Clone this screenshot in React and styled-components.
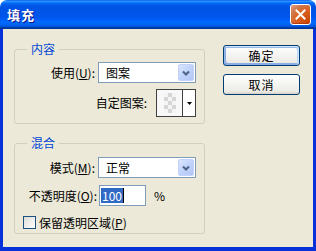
import React from 'react';
import styled, { createGlobalStyle } from 'styled-components';

const GlobalStyle = createGlobalStyle`
  html, body {
    margin: 0;
    padding: 0;
    background: #ffffff;
  }
  body {
    font-family: "Noto Sans CJK SC", "Liberation Sans", sans-serif;
    font-size: 12px;
    color: #000;
  }
`;

const Window = styled.div`
  width: 316px;
  height: 251px;
  display: flex;
  flex-direction: column;
  box-sizing: border-box;
`;

const TitleBar = styled.div`
  height: 29px;
  flex-shrink: 0;
  display: flex;
  align-items: center;
  justify-content: space-between;
  padding: 0 5px 0 7px;
  border-radius: 7px 7px 0 0;
  background: linear-gradient(
    to bottom,
    #0058ee 0%,
    #3593ff 4%,
    #288eff 6%,
    #127dff 8%,
    #036ffc 10%,
    #0262ee 14%,
    #0057e5 20%,
    #0054e3 24%,
    #0055eb 56%,
    #005bf5 66%,
    #026afe 76%,
    #0062ef 86%,
    #0052d6 92%,
    #0040ab 94%,
    #003092 100%
  );
`;

const Title = styled.span`
  color: #fff;
  font-weight: bold;
  font-size: 13px;
  letter-spacing: 1px;
  text-shadow: 1px 1px #0f1089;
`;

const CloseButton = styled.div`
  width: 21px;
  height: 21px;
  box-sizing: border-box;
  border: 1px solid #fff;
  border-radius: 3px;
  display: flex;
  align-items: center;
  justify-content: center;
  background: radial-gradient(circle at 90% 90%, #cc4600 0%, #dc6527 55%, #cd7546 70%, #e5a284 100%);
  box-shadow: inset 0 -1px 1px #b03a10;
`;

const Body = styled.div`
  flex: 1;
  display: flex;
  align-items: flex-start;
  gap: 18px;
  background: #ece9d8;
  border: 3px solid #0831d9;
  border-top: none;
  border-bottom-width: 4px;
  padding: 13px 0 0 11px;
`;

const Column = styled.div`
  display: flex;
  flex-direction: column;
  gap: ${p => p.gap || 0}px;
  padding-top: ${p => p.top || 0}px;
`;

const Group = styled.fieldset`
  width: 190px;
  box-sizing: border-box;
  margin: 0;
  border: 1px solid #d0d0bf;
  border-radius: 3px;
  padding: ${p => p.pad};
  display: flex;
  flex-direction: column;
`;

const Legend = styled.legend`
  color: #0046d5;
  line-height: 14px;
  padding: 0 4px;
  margin-left: 4px;
`;

const Row = styled.div`
  display: flex;
  align-items: center;
  gap: ${p => p.gap}px;
  margin-top: ${p => p.top || 0}px;
  height: ${p => p.h}px;
`;

const Label = styled.span`
  width: ${p => p.w}px;
  text-align: right;
  white-space: nowrap;
  line-height: 14px;
`;

const Key = styled.span`
  text-decoration: underline;
`;

const Select = styled.div`
  width: 98px;
  height: 21px;
  box-sizing: border-box;
  border: 1px solid #7f9db9;
  background: #fff;
  display: flex;
  align-items: center;
  justify-content: space-between;
  padding: 1px;
`;

const SelectValue = styled.span`
  padding-left: 6px;
  line-height: 14px;
`;

const DropButton = styled.div`
  width: 16px;
  height: 17px;
  box-sizing: border-box;
  border: 1px solid #c3d3fd;
  border-radius: 2px;
  background: linear-gradient(135deg, #dae5fd 0%, #c1d3fb 50%, #b1c7f5 100%);
  display: flex;
  align-items: center;
  justify-content: center;
`;

const Picker = styled.div`
  width: 40px;
  height: 28px;
  box-sizing: border-box;
  border: 1px solid #404040;
  background: #fff;
  display: flex;
`;

const Swatch = styled.div`
  flex: 1;
  display: flex;
  align-items: center;
  justify-content: center;
  background: #f8f8f8;
  border-right: 1px solid #404040;
`;

const Checker = styled.div`
  width: 12px;
  height: 20px;
  background-color: #f4f4f4;
  background-image: conic-gradient(#d6d6d6 25%, transparent 0 50%, #d6d6d6 0 75%, transparent 0);
  background-size: 8px 8px;
`;

const Arrow = styled.div`
  width: 12px;
  display: flex;
  align-items: center;
  justify-content: center;
`;

const TextInput = styled.div`
  width: 47px;
  height: 21px;
  box-sizing: border-box;
  border: 1px solid #7f9db9;
  background: #fff;
  display: flex;
  align-items: center;
  padding-left: 1px;
`;

const Selected = styled.span`
  background: #316ac5;
  color: #fff;
  line-height: 15px;
  padding: 0 1px;
`;

const Caret = styled.span`
  width: 1px;
  height: 15px;
  background: #000;
`;

const Unit = styled.span`
  margin-left: 6px;
`;

const CheckBox = styled.div`
  width: 13px;
  height: 13px;
  box-sizing: border-box;
  border: 1px solid #1c5180;
  background: linear-gradient(135deg, #dcdcd7 0%, #fff 100%);
`;

const Button = styled.div`
  width: 77px;
  height: 21px;
  box-sizing: border-box;
  border: 1px solid #003c74;
  border-radius: 3px;
  background: linear-gradient(180deg, #fff, #ecebe6 86%, #d6d0c5);
  display: flex;
  align-items: center;
  justify-content: center;
  letter-spacing: 1px;
  box-shadow: ${p =>
    p.primary
      ? 'inset -1px 1px #cee7ff, inset 1px 2px #98b8ea, inset -2px 2px #bcd4f6, inset 1px -1px #89ade4, inset 2px -2px #89ade4'
      : 'none'};
`;

export default function App() {
  return (
    <>
      <GlobalStyle />
      <Window>
        <TitleBar>
          <Title>填充</Title>
          <CloseButton>
            <svg width="11" height="11" viewBox="0 0 11 11">
              <path d="M1.5 1.5 L9.5 9.5 M9.5 1.5 L1.5 9.5" stroke="#fff" strokeWidth="2" strokeLinecap="square" />
            </svg>
          </CloseButton>
        </TitleBar>
        <Body>
          <Column gap={12}>
            <Group pad="6px 8px 6px 8px">
              <Legend>内容</Legend>
              <Row gap={3} h={21}>
                <Label w={72}>使用(<Key>U</Key>):</Label>
                <Select>
                  <SelectValue>图案</SelectValue>
                  <DropButton>
                    <svg width="8" height="6" viewBox="0 0 8 6">
                      <path d="M1 1.5 L4 4.5 L7 1.5" fill="none" stroke="#4d6185" strokeWidth="2" />
                    </svg>
                  </DropButton>
                </Select>
              </Row>
              <Row gap={9} h={28} top={6}>
                <Label w={124}>自定图案:</Label>
                <Picker>
                  <Swatch>
                    <Checker />
                  </Swatch>
                  <Arrow>
                    <svg width="5" height="3" viewBox="0 0 5 3">
                      <path d="M0 0 H5 L2.5 3 Z" fill="#000" />
                    </svg>
                  </Arrow>
                </Picker>
              </Row>
            </Group>
            <Group pad="7px 8px 3px 8px">
              <Legend>混合</Legend>
              <Row gap={3} h={21}>
                <Label w={72}>模式(<Key>M</Key>):</Label>
                <Select>
                  <SelectValue>正常</SelectValue>
                  <DropButton>
                    <svg width="8" height="6" viewBox="0 0 8 6">
                      <path d="M1 1.5 L4 4.5 L7 1.5" fill="none" stroke="#4d6185" strokeWidth="2" />
                    </svg>
                  </DropButton>
                </Select>
              </Row>
              <Row gap={2} h={21} top={7}>
                <Label w={74}>不透明度(<Key>O</Key>):</Label>
                <TextInput>
                  <Selected>100</Selected>
                  <Caret />
                </TextInput>
                <Unit>%</Unit>
              </Row>
              <Row gap={3} h={15} top={9}>
                <CheckBox />
                <span>保留透明区域(<Key>P</Key>)</span>
              </Row>
            </Group>
          </Column>
          <Column gap={8} top={3}>
            <Button primary>确定</Button>
            <Button>取消</Button>
          </Column>
        </Body>
      </Window>
    </>
  );
}
